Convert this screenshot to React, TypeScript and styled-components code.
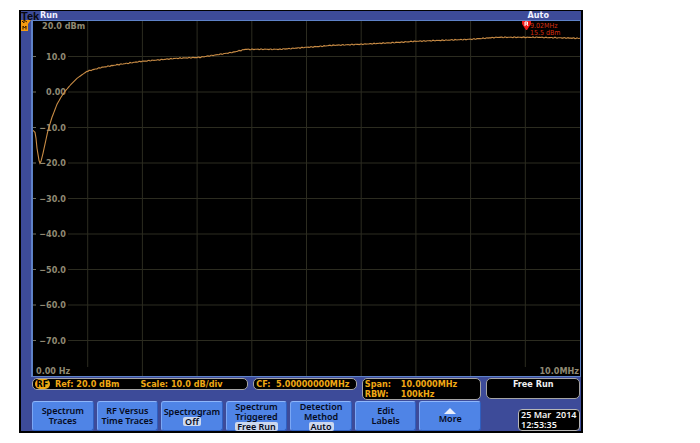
import React from 'react';
import styled, { createGlobalStyle } from 'styled-components';

const GlobalStyle = createGlobalStyle`
  * {
    box-sizing: border-box;
  }
  body {
    margin: 0;
    background: #fff;
    font-family: 'DejaVu Sans Condensed', 'Noto Sans', sans-serif;
    font-size: 9px;
    font-weight: 700;
    line-height: 10px;
  }
`;

const Page = styled.main`
  padding: 10px 117px 10px 19px;
`;

const Screen = styled.section`
  border: 2px solid #000;
  border-top-width: 1px;
  background: #3d4b99;
`;

const TopBar = styled.header`
  display: flex;
  height: 9px;
  line-height: 9px;
  color: #f0f0ff;
`;

const Brand = styled.span`
  width: 19px;
  font-family: 'Liberation Sans', sans-serif;
  font-size: 11px;
  line-height: 11px;
  color: #080810;
`;

const AcquisitionMode = styled.span`
  margin-left: auto;
  margin-right: 32px;
`;

const PlotArea = styled.div`
  display: grid;
  grid-template-columns: 10px 1fr;
`;

const Gutter = styled.svg`
  display: block;
  width: 11px;
  height: 12px;
`;

const Plot = styled.svg`
  display: block;
  width: 100%;
  border: 1px solid #5e82c8;
  border-left-width: 2px;
  background: #000;
`;

const AxisText = styled.text`
  fill: #908a74;
`;

const MarkerText = styled.text`
  font-size: 7px;
  font-weight: 400;
  fill: #d83010;
`;

const Readouts = styled.div`
  display: grid;
  grid-template-columns: 217fr 104fr 120fr 94fr;
  align-items: start;
  gap: 5px;
  padding: 1px 1px 0 11px;
`;

const Readout = styled.div<{ $tall?: boolean; $center?: boolean }>`
  display: flex;
  flex-wrap: wrap;
  align-content: flex-start;
  justify-content: ${(p) => (p.$center ? 'center' : 'flex-start')};
  min-height: ${(p) => (p.$tall ? 21 : 12)}px;
  padding: 0 2px;
  border: 1px solid #a5a5a5;
  border-radius: 5px;
  background: #000;
  color: ${(p) => (p.$center ? '#f0f0f0' : '#f0a814')};
  white-space: pre;
`;

const Source = styled.span`
  width: 15px;
  margin-right: 5px;
  border-radius: 5px;
  background: #f0a814;
  color: #000;
  text-align: center;
`;

const Scale = styled.span`
  margin-left: 21px;
`;

const Bandwidth = styled.dl`
  display: grid;
  grid-template-columns: 36px auto;
  margin: 0;
`;

const Value = styled.dd`
  margin: 0;
`;

const Footer = styled.footer`
  display: grid;
  grid-template-columns: 449fr 99fr;
  align-items: end;
  padding: 1px 1px 0 11px;
  font-family: 'Noto Sans', sans-serif;
  font-weight: 600;
`;

const Menu = styled.nav`
  display: grid;
  grid-template-columns: repeat(7, 1fr);
  gap: 3px;
`;

const MenuButton = styled.button`
  display: flex;
  flex-direction: column;
  align-items: center;
  justify-content: center;
  height: 30px;
  padding: 0;
  border: 1px solid #2f5fc0;
  border-top-color: #8fb6fa;
  border-left-color: #7ba7f5;
  border-radius: 3px;
  background: #4f84e6;
  color: #050a1c;
  font: inherit;
  line-height: 10px;
  white-space: pre;
`;

const Choice = styled.span`
  padding: 0 2px;
  border-radius: 2px;
  background: #ccd8ef;
  line-height: 9px;
`;

const Clock = styled.time`
  justify-self: end;
  width: 62px;
  padding: 0 2px;
  border: 1px solid #b8b8b8;
  border-radius: 4px;
  background: #000;
  color: #f4f4f4;
  white-space: pre;
`;

const trace = [
  [0, 109], [2, 111], [3, 117], [4, 127], [6, 139], [7, 142], [8, 140],
  [10, 132], [15, 109], [19, 96], [24, 83], [28, 76], [32, 70], [38, 63],
  [44, 57], [54, 50], [69, 46], [87, 43], [109, 40], [144, 37], [167, 36],
  [187, 33], [200, 31], [212, 28], [247, 28], [274, 26], [300, 24],
  [327, 23], [367, 21], [382, 20], [437, 18], [464, 16], [504, 16], [547, 17],
];

const levelAt = (x: number) => {
  const i = Math.max(1, trace.findIndex((point) => point[0] >= x));
  const [x0, y0] = trace[i - 1];
  const [x1, y1] = trace[i];
  return y0 + ((y1 - y0) * (x - x0)) / (x1 - x0);
};

// measurement noise only shows once the response flattens out
const tracePath = Array.from({ length: 548 }, (_, x) => {
  const noise = x > 54 ? Math.sin(x * 1.7) * Math.sin(x * 0.31) * 0.5 : 0;
  return `${x ? 'L' : 'M'}${x} ${(levelAt(x) + noise + 0.3).toFixed(1)}`;
}).join('');

const levels = ['10.0', '0.00', '−10.0', '−20.0', '−30.0', '−40.0', '−50.0', '−60.0', '−70.0'];

const menuItems: { label: string; choice?: string }[] = [
  { label: 'Spectrum\nTraces' },
  { label: 'RF Versus\nTime Traces' },
  { label: 'Spectrogram', choice: 'Off' },
  { label: 'Spectrum\nTriggered', choice: 'Free Run' },
  { label: 'Detection\nMethod', choice: 'Auto' },
  { label: 'Edit\nLabels' },
];

const SpectrumPlot: React.FunctionComponent = () => {
  return (
    <Plot viewBox="0 0 547 355">
      <g stroke="#2c2c20" strokeWidth="1">
        {levels.map((level, i) => (
          <React.Fragment key={level}>
            <path d={`M0 ${(i + 1) * 35.5}h3`} stroke="#707060" />
            <path d={`M35 ${(i + 1) * 35.5}H547`} />
            <path d={`M${(i + 1) * 54.7} 0V${i === 0 || i === 8 ? 346 : 355}`} />
          </React.Fragment>
        ))}
      </g>
      <AxisText x="9" y="8">20.0 dBm</AxisText>
      {levels.map((level, i) => (
        <AxisText key={level} x="33" y={(i + 1) * 35.5 + 3} textAnchor="end">
          {level}
        </AxisText>
      ))}
      <AxisText x="3" y="353">0.00 Hz</AxisText>
      <AxisText x="546" y="353" textAnchor="end">10.0MHz</AxisText>
      <path d={tracePath} fill="none" stroke="#c98c45" strokeWidth="1.1" />
      <path d="M489 0h9v3l-4 6h-1l-4-6z" fill="#f01818" />
      <path d="M492 5V1h2.500v2H492M494 3l1 2" fill="none" stroke="#fff" />
      <MarkerText x="497" y="7">9.02MHz</MarkerText>
      <MarkerText x="497" y="14">15.5 dBm</MarkerText>
    </Plot>
  );
};

export default function App() {
  return (
    <>
      <GlobalStyle />
      <Page>
        <Screen>
          <TopBar>
            <Brand>Tek</Brand>
            <span>Run</span>
            <AcquisitionMode>Auto</AcquisitionMode>
          </TopBar>
          <PlotArea>
            <Gutter viewBox="0 0 11 12">
              <path d="M0 0h10L7 4v7H0z" fill="#f49a12" />
              <path d="M2 9.500V6l1.500 2L5 6v3.500M1 1l2 2V0l3 2" fill="none" stroke="#2c1800" />
            </Gutter>
            <SpectrumPlot />
          </PlotArea>
          <Readouts>
            <Readout>
              <Source>RF</Source>
              <span>Ref: 20.0 dBm</span>
              <Scale>Scale: 10.0 dB/div</Scale>
            </Readout>
            <Readout>CF:  5.00000000MHz</Readout>
            <Readout $tall>
              <Bandwidth>
                <dt>Span:</dt>
                <Value>10.0000MHz</Value>
                <dt>RBW:</dt>
                <Value>100kHz</Value>
              </Bandwidth>
            </Readout>
            <Readout $tall $center>Free Run</Readout>
          </Readouts>
          <Footer>
            <Menu>
              {menuItems.map((item) => (
                <MenuButton key={item.label} type="button">
                  <span>{item.label}</span>
                  {item.choice ? <Choice>{item.choice}</Choice> : null}
                </MenuButton>
              ))}
              <MenuButton type="button">
                <svg width="12" height="6" viewBox="0 0 12 6">
                  <path d="M0 6l6-6 6 6z" fill="#e8eefb" />
                </svg>
                <span>More</span>
              </MenuButton>
            </Menu>
            <Clock dateTime="2014-03-25T12:53:35">{'25 Mar  2014\n12:53:35'}</Clock>
          </Footer>
        </Screen>
      </Page>
    </>
  );
}
